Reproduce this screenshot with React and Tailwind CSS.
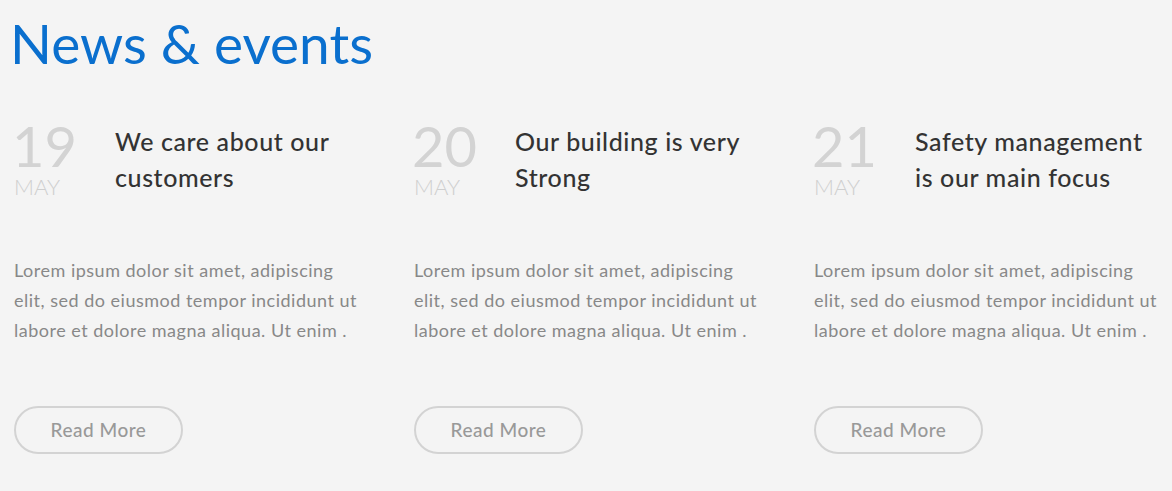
import React from "react";

const posts = [
  { day: "19", month: "MAY", title: ["We care about our", "customers"] },
  { day: "20", month: "MAY", title: ["Our building is very", "Strong"] },
  { day: "21", month: "MAY", title: ["Safety management", "is our main focus"] },
];

const PostCard = ({ post }) => {
  return (
    <div className="w-[400px] shrink-0">
      <div className="flex h-[137px]">
        <div className="w-[101px] shrink-0 flex flex-col">
          <span className="text-[56px] leading-[52px] font-normal text-[#d3d3d3] -ml-[2px] pt-[2px]">{post.day}</span>
          <span className="text-[22px] leading-[22px] font-light text-[#cfcfcf] mt-[4px]">{post.month}</span>
        </div>
        <h3 className="text-[25px] leading-[36px] font-medium tracking-[0.6px] text-[#333] pt-[5px]">
          {post.title[0]}
          <br />
          {post.title[1]}
        </h3>
      </div>
      <p className="text-[18px] leading-[30px] tracking-[0.5px] text-[#888] h-[151px]">
        Lorem ipsum dolor sit amet, adipiscing
        <br />
        elit, sed do eiusmod tempor incididunt ut
        <br />
        labore et dolore magna aliqua. Ut enim .
      </p>
      <button className="w-[169px] h-[48px] rounded-full border-2 border-[#d3d3d3] text-[19px] tracking-[0.5px] text-[#999] font-medium">
        Read More
      </button>
    </div>
  );
};

const App = () => {
  return (
    <div className="w-[1172px] h-[491px] overflow-hidden bg-[#f4f4f4] font-['Lato',sans-serif]">
      <h1 className="text-[55px] leading-[60px] text-[#0a6fce] pl-[10px] pt-[13px]">News &amp; events</h1>
      <div className="flex pl-[14px] pt-[45px]">
        {posts.map((post) => (
          <PostCard key={post.day} post={post} />
        ))}
      </div>
    </div>
  );
};

export default App;
